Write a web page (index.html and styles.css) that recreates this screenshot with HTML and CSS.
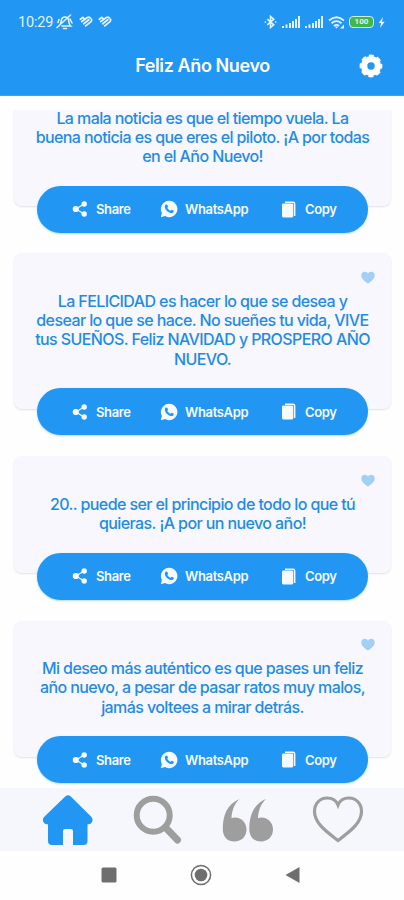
FILE: index.html
```html
<!DOCTYPE html>
<html lang="es">
<head>
<meta charset="utf-8">
<title>Feliz Año Nuevo</title>
<link rel="stylesheet" href="styles.css">
</head>
<body>
<svg class="defs" width="0" height="0" aria-hidden="true">
  <symbol id="share" viewBox="0 0 16 16"><path d="M12 3 4 8l8 5" fill="none" stroke="currentColor" stroke-width="1.2"/><circle cx="12.2" cy="3" r="2.7"/><circle cx="3.8" cy="8" r="3.100"/><circle cx="12.2" cy="13" r="2.7"/></symbol>
  <symbol id="whatsapp" viewBox="0 0 18 18"><path d="M9 .8A8.2 8.2 0 0 0 1.9 13L.8 17.2l4.3-1.1A8.2 8.2 0 1 0 9 .8Z"/><path class="phone" d="M6.2 4.5c.6-.3 1 0 1.2.5l.6 1.4c.2.5-.7 1.1-.7 1.4.7 1.4 1.7 2.3 3.1 2.9.5.1 1-1.1 1.4-.9l1.7.8c.5.3.1 1.4-.4 1.9-1.2 1.2-3.4.5-5.1-.7C6.300 10.500 4.700 8.500 4.800 6.700c.1-1 .7-1.900 1.400-2.200Z"/></symbol>
  <symbol id="copy" viewBox="0 0 16 17"><path d="M4 1.200h8q1.700 0 1.700 1.700v12" fill="none" stroke="currentColor" stroke-width="1.400"/><rect x="1" y="2.400" width="11.300" height="14" rx="1.300"/></symbol>
  <symbol id="heart" viewBox="0 0 14 12"><path d="M7 12C4 9.800.3 7.300.3 3.900.3 1.700 1.800.3 3.700.3 5.200.3 6.400 1 7 2.200 7.600 1 8.800.3 10.300.3c1.900 0 3.400 1.400 3.400 3.600C13.700 7.300 10 9.800 7 12Z"/></symbol>
  <symbol id="health" viewBox="0 0 14 12"><path d="M1.400 3.300 3.800 1.400 5.500 3M2.800 5.600 8.400 1.500q1.700-1 2.800.3M4.800 7.700l5-3.900M6.700 9.900l5.300-4.300q1-1.200.4-2.500" fill="none" stroke="currentColor" stroke-width="1.800" stroke-linecap="round"/></symbol>
  <symbol id="signal" viewBox="0 0 19 12"><path d="M0 10h2v2H0zM3.500 8.500h2V12h-2zM7 7h2v5H7zM10 5h2v7h-2zM13 3h2v9h-2zM16 0h2v12h-2z"/></symbol>
</svg>
<header class="top">
  <div class="status">
    <span class="clock">10:29</span>
    <svg class="bell" viewBox="0 0 17 16"><path d="M3 12c2-1.500 2-3.500 2.300-5.500C5.700 4 7 3 9 3s3.500 1.500 3.700 4c.1 2 .3 3.500 2 5H6M7.500 14.500h3M1 13.500 14.500 1M2 8.500l1-3M14 5l2 4" fill="none" stroke="currentColor" stroke-width="1.600" stroke-linecap="round"/></svg>
    <svg class="health"><use href="#health"/></svg>
    <svg class="health"><use href="#health"/></svg>
    <span class="spacer"></span>
    <svg class="bluetooth" viewBox="0 0 14 14"><path d="m3.500 4 7 6L7 13V1l3.500 3-7 6M.7 7h1.600M11.700 7h1.600" fill="none" stroke="currentColor" stroke-width="1.700"/></svg>
    <svg class="signal"><use href="#signal"/></svg>
    <svg class="signal"><use href="#signal"/></svg>
    <svg class="wifi" viewBox="0 0 17 13"><path d="M1 4.500q7.500-6.500 15 0M3.500 7.300q5-4.400 10 0M6 10q2.500-2.300 5 0" fill="none" stroke="currentColor" stroke-width="1.800"/><path d="m6.600 10.500 1.900 2 1.900-2zM12 12.500l4-4v4z"/></svg>
    <span class="battery">100</span>
    <svg class="bolt" viewBox="0 0 7 11"><path d="M5 0 .5 6H3L2 11l4.700-6.300H4z"/></svg>
  </div>
  <div class="bar">
    <h1>Feliz Año Nuevo</h1>
    <svg class="gear" viewBox="0 0 24 24"><circle cx="12" cy="12" r="6.900" fill="none" stroke="currentColor" stroke-width="6.400"/><circle cx="12" cy="12" r="9.700" fill="none" stroke="currentColor" stroke-width="3.400" stroke-dasharray="4.700 2.918" stroke-dashoffset="2.350"/></svg>
  </div>
</header>
<main class="feed">
  <article class="card first">
    <p>La mala noticia es que el tiempo vuela. La<br>buena noticia es que eres el piloto. ¡A por todas<br>en el Año Nuevo!</p>
    <div class="actions"><span class="share"><svg><use href="#share"/></svg>Share</span><span class="whatsapp"><svg><use href="#whatsapp"/></svg>WhatsApp</span><span class="copy"><svg><use href="#copy"/></svg>Copy</span></div>
  </article>
  <article class="card">
    <svg class="like"><use href="#heart"/></svg>
    <p>La FELICIDAD es hacer lo que se desea y<br>desear lo que se hace. No sueñes tu vida, VIVE<br>tus SUEÑOS. Feliz NAVIDAD y PROSPERO AÑO<br>NUEVO.</p>
    <div class="actions"><span class="share"><svg><use href="#share"/></svg>Share</span><span class="whatsapp"><svg><use href="#whatsapp"/></svg>WhatsApp</span><span class="copy"><svg><use href="#copy"/></svg>Copy</span></div>
  </article>
  <article class="card">
    <svg class="like"><use href="#heart"/></svg>
    <p>20.. puede ser el principio de todo lo que tú<br>quieras. ¡A por un nuevo año!</p>
    <div class="actions"><span class="share"><svg><use href="#share"/></svg>Share</span><span class="whatsapp"><svg><use href="#whatsapp"/></svg>WhatsApp</span><span class="copy"><svg><use href="#copy"/></svg>Copy</span></div>
  </article>
  <article class="card">
    <svg class="like"><use href="#heart"/></svg>
    <p>Mi deseo más auténtico es que pases un feliz<br>año nuevo, a pesar de pasar ratos muy malos,<br>jamás voltees a mirar detrás.</p>
    <div class="actions"><span class="share"><svg><use href="#share"/></svg>Share</span><span class="whatsapp"><svg><use href="#whatsapp"/></svg>WhatsApp</span><span class="copy"><svg><use href="#copy"/></svg>Copy</span></div>
  </article>
</main>
<nav class="tabs">
  <svg class="active" viewBox="0 0 52 52"><path d="M23.500 2.200Q26 .2 28.500 2.200L49.500 23q2.500 3.500-.5 6.500-1.500 1-3.500.7V47q0 4-4 4H31V37q0-2-2-2h-6q-2 0-2 2v14H10q-4 0-4-4V30.200q-2 .3-3.500-.7-3-3-.5-6.500Z"/></svg>
  <svg viewBox="0 0 52 52"><circle cx="21.200" cy="21.200" r="16.500" fill="none" stroke="currentColor" stroke-width="6"/><path d="m34 34 11.500 12" stroke="currentColor" stroke-width="7" stroke-linecap="round"/></svg>
  <svg viewBox="0 0 52 52"><path id="q" d="M17.500 5C5 10 .8 21.500.8 35c0 8 4.700 12.500 11.700 12.500 7 0 12-5 12-12s-5-12-11.500-12q-2 0-3.500.7C9.700 17 12 10.500 17.500 5Z"/><use href="#q" x="26.500"/></svg>
  <svg viewBox="0 0 52 52"><path d="M26 46.500C15 38 2.500 29.500 2.500 17.500 2.500 9.500 8 4 15 4c5 0 9.300 2.700 11 7 1.700-4.300 6-7 11-7 7 0 12.500 5.500 12.500 13.500C49.500 29.500 37 38 26 46.500Z" fill="none" stroke="currentColor" stroke-width="3.200"/></svg>
</nav>
<footer class="system">
  <svg viewBox="0 0 22 22"><rect x="3.500" y="3.500" width="15" height="15" rx="1.500"/></svg>
  <svg viewBox="0 0 22 22"><circle cx="11" cy="11" r="9.600" fill="none" stroke="currentColor" stroke-width="1.500"/><circle cx="11" cy="11" r="6.300"/></svg>
  <svg viewBox="0 0 22 22"><path d="M3.500 11 17.500 3v16z"/></svg>
</footer>
</body>
</html>
```
FILE: styles.css
```css
* { box-sizing: border-box; }
body { margin: 0; width: 404px; height: 900px; overflow: hidden; display: flex; flex-direction: column; background: #fefefe; font-family: Inter, sans-serif; }
svg { display: block; flex: none; fill: currentColor; }
.defs { position: absolute; }
.top { height: 96px; flex: none; background: #2196f3; color: #fff; border-bottom: 1px solid #3da4f5; }
.status { height: 44px; padding: 0 19px 0 18px; display: flex; align-items: center; color: #e3f2fe; }
.clock { font: 14.5px/20px Roboto, sans-serif; width: 36px; white-space: nowrap; letter-spacing: -.2px; margin-top: 2px; }
.bell { width: 17px; height: 16px; margin: 0 6px 0 2px; }
.health { width: 14px; height: 12px; margin-right: 5px; }
.spacer { flex: 1; }
.bluetooth { width: 13px; height: 14px; margin-right: 5px; }
.signal { width: 19px; height: 12px; margin-right: 4px; }
.wifi { width: 17px; height: 13px; margin-right: 4px; }
.battery { width: 25px; height: 12px; border: 1.500px solid #d3edf9; border-radius: 4px; background: #43b649; font: bold 8px/10px Roboto, sans-serif; text-align: center; }
.bolt { width: 7px; height: 11px; margin-left: 4px; }
.bar { display: grid; grid-template-columns: 1fr auto 1fr; align-items: center; height: 43px; padding-right: 21px; }
h1 { grid-column: 2; margin: 0 0 0 22px; font-size: 18px; line-height: 24px; font-weight: 600; letter-spacing: -.4px; white-space: nowrap; }
.gear { width: 24px; height: 24px; justify-self: end; }
.feed { flex: none; height: 678px; margin-top: 14px; padding: 0 13px 0 14px; display: flex; flex-direction: column; gap: 47.400px; }
.card { position: relative; flex: none; padding: 38.600px 0 40px; background: #f7f7fd; border-radius: 8px; box-shadow: 0 1px 2px #b9b9c266; }
.first { height: 96px; padding: 0; border-radius: 0 0 8px 8px; }
.card p { margin: 0; text-align: center; color: #1f8ce3; font-size: 16px; line-height: 19.200px; font-weight: 500; letter-spacing: -.59px; white-space: nowrap; }
.first p { margin-top: -1.500px; }
.like { position: absolute; right: 16.500px; top: 17.500px; width: 14px; height: 13px; color: #a2cff5; }
.actions { position: absolute; left: 23px; right: 23px; bottom: -26.500px; height: 47px; border-radius: 24px; background: #2196f3; box-shadow: 0 1px 2px #2196f355; color: #f5faff; display: flex; align-items: center; padding-left: 35px; font-size: 13px; font-weight: 600; letter-spacing: -.35px; }
.actions span { display: flex; align-items: center; }
.share { width: 88px; }
.share svg { width: 16px; height: 16px; margin-right: 8px; }
.whatsapp { width: 121px; }
.whatsapp svg { width: 18px; height: 18px; margin-right: 7px; }
.phone { fill: #2196f3; }
.copy svg { width: 16px; height: 17px; margin-right: 8px; }
.tabs { height: 63px; flex: none; display: flex; gap: 38px; padding: 6px 0 0 42px; background: #f6f6fd; color: #9e9e9e; }
.tabs svg { width: 52px; height: 52px; }
.tabs .active { color: #2196f3; }
.system { flex: 1; display: flex; justify-content: center; gap: 70px; padding: 13px 2px 0 0; color: #6e6e6e; background: #fefefe; }
.system svg { width: 22px; height: 22px; }
```
